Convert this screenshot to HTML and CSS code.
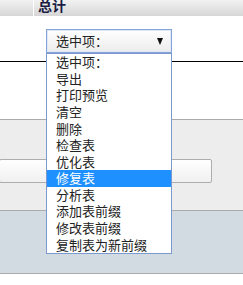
FILE: index.html
```html
<!DOCTYPE html>
<html lang="zh-CN">
<head>
    <meta charset="UTF-8">
    <title>表操作</title>
    <link rel="stylesheet" href="styles.css">
</head>
<body>
<div class="page">
    <div class="head">
        <div class="head-cell blank"></div>
        <div class="head-cell title">总计</div>
    </div>
    <div class="top">
        <div class="select">
            <span>选中项：</span>
            <span class="arrow"></span>
        </div>
    </div>
    <div class="rule"></div>
    <div class="gap"></div>
    <div class="panel">
        <div class="box"></div>
    </div>
    <div class="foot"></div>

    <ul class="options">
        <li>选中项：</li>
        <li>导出</li>
        <li>打印预览</li>
        <li>清空</li>
        <li>删除</li>
        <li>检查表</li>
        <li>优化表</li>
        <li class="on">修复表</li>
        <li>分析表</li>
        <li>添加表前缀</li>
        <li>修改表前缀</li>
        <li>复制表为新前缀</li>
    </ul>
</div>
</body>
</html>
```

FILE: styles.css
```css
body{
    margin: 0;
    background: #fff;
    font-family: "Noto Sans CJK SC", "DejaVu Sans", sans-serif;
}
.page{
    position: relative;
    width: 243px;
    height: 285px;
    overflow: hidden;
}
.head{
    display: flex;
    height: 16px;
    background: linear-gradient(#f2f2f2, #d6d6d6);
}
.head-cell{
    height: 16px;
}
.blank{
    width: 33px;
    border-right: 1px solid #fff;
}
.title{
    padding-left: 4px;
    font-weight: bold;
    font-size: 14px;
    line-height: 10px;
    color: #1c1c44;
}
.top{
    height: 45px;
    padding-left: 46px;
    box-sizing: border-box;
    padding-top: 13px;
}
.select{
    display: flex;
    align-items: center;
    justify-content: space-between;
    width: 126px;
    height: 24px;
    box-sizing: border-box;
    padding: 0 8px 0 9px;
    border: 1px solid #86a3d6;
    box-shadow: inset 0 0 0 1px #dfe8f7;
    background: linear-gradient(#ffffff, #ececec);
    font-size: 13px;
    line-height: 14px;
    color: #222;
}
.arrow{
    width: 0;
    height: 0;
    border-left: 3.5px solid transparent;
    border-right: 3.5px solid transparent;
    border-top: 7px solid #111;
}
.rule{
    border-top: 1px solid #000;
}
.gap{
    height: 57px;
}
.panel{
    height: 51px;
    border-top: 1px solid #aaa;
    background: #ededed;
    padding-top: 39px;
}
.box{
    width: 213px;
    height: 24px;
    margin-left: -1px;
    box-sizing: border-box;
    border: 1px solid #adadad;
    border-radius: 2px;
    background: linear-gradient(#ffffff, #f0f0f0);
}
.foot{
    height: 62px;
    border-top: 1px solid #aaa;
    border-bottom: 1px solid #aaa;
    background: #d3dbe2;
}
.options{
    position: absolute;
    left: 46px;
    top: 53px;
    width: 126px;
    height: 201px;
    box-sizing: border-box;
    margin: 0;
    padding: 0;
    list-style: none;
    border: 1px solid #7b98cf;
    background: #fff;
    display: flex;
    flex-direction: column;
}
.options li{
    flex: 1;
    padding-left: 9px;
    font-size: 13px;
    line-height: 14px;
    color: #222;
    display: flex;
    align-items: center;
}
.options .on{
    background: #1e90ff;
    color: #fff;
}
```
